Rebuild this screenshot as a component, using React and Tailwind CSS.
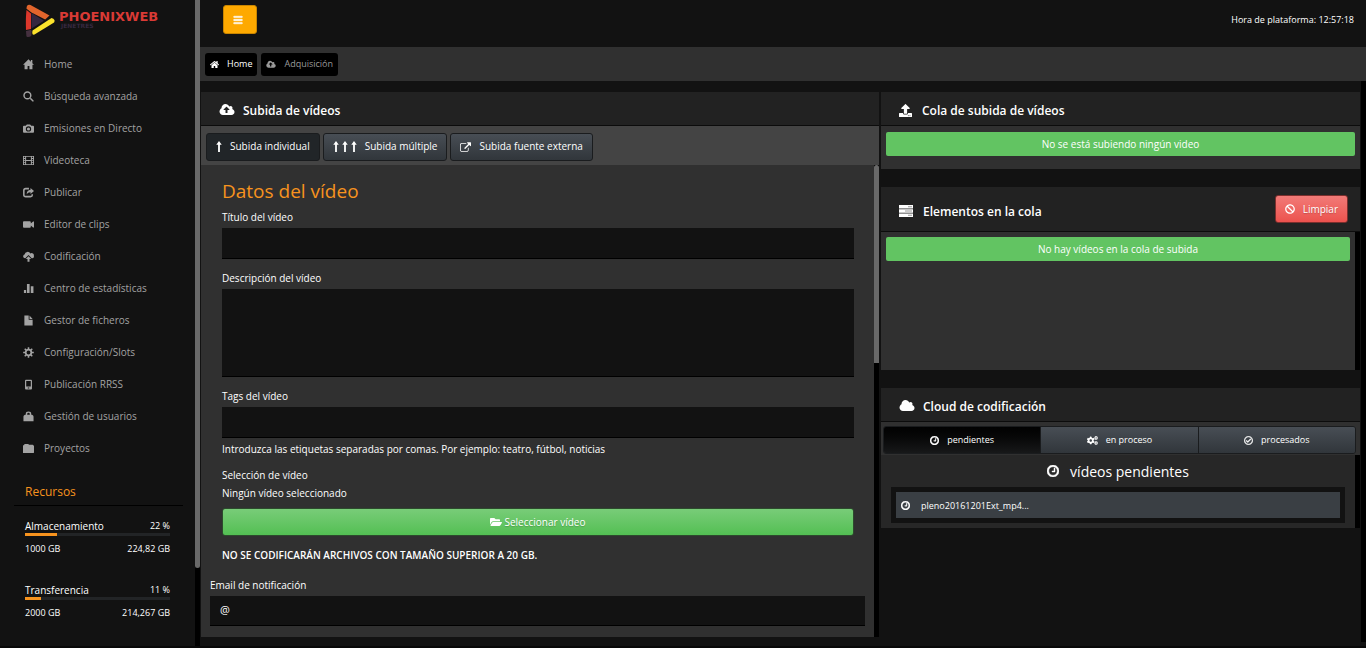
import React from "react";
import {
  FaUpload, FaBan, FaCogs, FaRegCheckCircle, FaFolderOpen, FaBars, FaHome,
} from "react-icons/fa";

const svg = (viewBox, children) =>
  function Icon({ className }) {
    return (
      <svg viewBox={viewBox} fill="currentColor" className={className} aria-hidden="true">
        {children}
      </svg>
    );
  };

const CLOUD =
  "M1984 1152q0 159-112.5 271.5t-271.5 112.5h-1088q-185 0-316.5-131.5t-131.5-316.5q0-130 70-240t188-165q-2-30-2-43 0-212 150-362t362-150q156 0 285.5 87t188.5 231q71-62 166-62 106 0 181 75t75 181q0 76-41 138 130 31 213.5 135.5t83.5 238.5z";

const CloudUp = svg(
  "0 0 2048 1792",
  <path fillRule="evenodd" d={"M1344 864q0-14-9-23l-352-352q-9-9-23-9t-23 9l-351 351q-10 12-10 24 0 14 9 23t23 9h224v352q0 13 9.5 22.5t22.5 9.5h192q13 0 22.5-9.5t9.5-22.5v-352h224q13 0 22.5-9.5t9.5-22.5z" + CLOUD} />
);
const Cloud = svg("0 0 2048 1792", <path d={CLOUD} />);
const Clock = svg(
  "0 128 1536 1536",
  <path stroke="currentColor" strokeWidth="60" d="M1024 544v448q0 14-9 23t-23 9h-320q-14 0-23-9t-9-23v-64q0-14 9-23t23-9h224v-352q0-14 9-23t23-9h64q14 0 23 9t9 23zM1312 896q0-148-73-273t-198-198-273-73-273 73-198 198-73 273 73 273 198 198 273 73 273-73 198-198 73-273zM1536 896q0 209-103 385.5t-279.5 279.5-385.5 103-385.5-103-279.5-279.5-103-385.5 103-385.5 279.5-279.5 385.5-103 385.5 103 279.5 279.5 103 385.5z" />
);
const External = svg(
  "0 0 1792 1536",
  <path d="M1408 928v320q0 119-84.5 203.5t-203.5 84.5h-832q-119 0-203.5-84.5t-84.5-203.5v-832q0-119 84.5-203.5t203.5-84.5h704q14 0 23 9t9 23v64q0 14-9 23t-23 9h-704q-66 0-113 47t-47 113v832q0 66 47 113t113 47h832q66 0 113-47t47-113v-320q0-14 9-23t23-9h64q14 0 23 9t9 23zM1792 64v512q0 26-19 45t-45 19-45-19l-176-176-652 652q-10 10-23 10t-23-10l-114-114q-10-10-10-23t10-23l652-652-176-176q-19-19-19-45t19-45 45-19h512q26 0 45 19t19 45z" />
);
const ArrowUp = svg("0 0 6 12", <path d="M3 0 6 4H4v8H2V4H0z" />);
const Tasks = svg(
  "0 0 14 12",
  <>
    <path d="M0 0h14v3.4H0zM0 4.300h14v3.400H0zM0 8.600h14V12H0z" />
    <path fill="#9a9a9a" d="M9 1.200h4v1H9zM6 5.500h7v1H6zM9 9.800h4v1H9z" />
  </>
);

const Home = svg("0 0 12 12", <path d="M6 .4 0 6.4h1.7v4.9H5V7.6h2v3.7h3.3V6.4H12L10.2 4.600V1.200H8.600V3z" />);
const Search = svg(
  "0 0 12 12",
  <>
    <circle cx="4.800" cy="4.800" r="3.700" fill="none" stroke="currentColor" strokeWidth="1.600" />
    <path d="m7.400 8.500 1.100-1.100 3 3c.5.800-.4 1.600-1.100 1.100z" />
  </>
);
const Camera = svg(
  "0 0 12 12",
  <path fillRule="evenodd" d="M1 3h2l1.200-1.500h3.600L9 3h2q1 0 1 1v5.500q0 1-1 1H1q-1 0-1-1V4q0-1 1-1zm5 .6a2.900 2.900 0 1 0 0 5.800 2.900 2.900 0 0 0 0-5.800zm0 1.200a1.700 1.700 0 1 1 0 3.400 1.700 1.700 0 0 1 0-3.400z" />
);
const Film = svg(
  "0 0 12 12",
  <path fillRule="evenodd" d="M0 1h12v10H0zM1 2v1.300h1.300V2zm0 2.300v1.300h1.300V4.300zm0 2.200v1.300h1.300V6.500zm0 2.200V10h1.300V8.700zM9.700 2v1.300H11V2zm0 2.300v1.300H11V4.300zm0 2.200v1.300H11V6.500zm0 2.200V10H11V8.700zM3.400 2v3.400h5.200V2zm0 4.600V10h5.200V6.600z" />
);
const Share = svg(
  "0 0 12 12",
  <>
    <path d="M6.500 1.800H3Q.9 1.800.9 3.900v4.800q0 1.800 2.100 1.800h5.200q1.900 0 1.900-1.800V8" fill="none" stroke="currentColor" strokeWidth="1.700" />
    <path d="m8.200 1 3.800 3.300-3.800 3.200V5.600Q5.400 5.500 4 7.800 4.200 3.400 8.200 3z" />
  </>
);
const Video = svg("0 0 12 12", <path d="M1 2.500h6.500q1 0 1 1v1.300L11 2.800h1v6.400h-1L8.500 7.200v1.300q0 1-1 1H1q-1 0-1-1v-5q0-1 1-1z" />);
const CloudArrow = svg(
  "0 0 12 12",
  <>
    <path d="M3 8H2.200A2.200 2.200 0 0 1 1.700 3.700 3.500 3.500 0 0 1 8.100 2.600 2.500 2.500 0 0 1 11.800 5.400 2 2 0 0 1 10.200 8H9.500L6 4.300 2.500 8z" />
    <path d="M6 5.700 8.900 8.700H7.100v3H4.900v-3H3.100z" />
  </>
);
const Stats = svg("0 0 12 12", <path d="M1 7.500h2.400V11H1zM4.300 1h2.900v10H4.300zM8.500 3.500h2.900V11H8.500z" />);
const File = svg("0 0 12 12", <path d="M1.500 .5h4.700v4.700h4.300v6.300h-9zM7.100 .5l3.400 3.800H7.100z" />);
const Gear = svg(
  "0 0 12 12",
  <>
    <circle cx="6" cy="6" r="3.100" fill="none" stroke="currentColor" strokeWidth="1.900" />
    <path d="M6 .2v2.300M6 9.500v2.300M.2 6h2.300M9.500 6h2.300M1.900 1.900l1.600 1.600M8.500 8.500l1.600 1.600M1.900 10.100l1.600-1.600M8.500 3.500l1.600-1.600" stroke="currentColor" strokeWidth="1.700" />
  </>
);
const Phone = svg("0 0 12 12", <path fillRule="evenodd" d="M3.200.8h5.600q1 0 1 1v8.600q0 1-1 1H3.200q-1 0-1-1V1.800q0-1 1-1zM3.500 2.300v6h5v-6zM5.200 9.300v1h1.600v-1z" />);
const Bag = svg("0 0 12 12", <path fillRule="evenodd" d="M3 4V3.200Q3 .6 6 .6t3 2.600V4h.8q1.700.5 1.700 2V11.200H.5V6Q.5 4.500 2.200 4zm1.600 0h2.800V3.300Q7.400 2 6 2T4.600 3.300z" />);
const Folder = svg("0 0 12 12", <path d="M1.200 2.500V2.100q0-1 1-1h3.200q.8 0 1.200.9H10.500q1 0 1 1h.5v7q0 1-1 1H0V2.500z" />);

const NAV = [
  [Home, "Home"], [Search, "Búsqueda avanzada"], [Camera, "Emisiones en Directo"],
  [Film, "Videoteca"], [Share, "Publicar"], [Video, "Editor de clips"],
  [CloudArrow, "Codificación"], [Stats, "Centro de estadísticas"], [File, "Gestor de ficheros"],
  [Gear, "Configuración/Slots"], [Phone, "Publicación RRSS"], [Bag, "Gestión de usuarios"],
  [Folder, "Proyectos"],
];

const RESOURCES = [
  { name: "Almacenamiento", percent: 22, total: "1000 GB", used: "224,82 GB" },
  { name: "Transferencia", percent: 11, total: "2000 GB", used: "214,267 GB" },
];

function Logo() {
  return (
    <a href="#" className="flex h-12 items-start gap-[3px] pt-1 pl-6" aria-label="Phoenixweb">
      <svg viewBox="0 0 32 34" className="h-[34px] w-8" aria-hidden="true">
        <path d="M7.500 9v15.500L20 16.800z" fill="#35273f" />
        <path d="M2.500 6 7 9.500V25l-5 1Q1.500 14 2.500 6z" fill="#dc372b" />
        <path d="M2.500 4.800Q2.500-.3 6.500.900L25.500 11.600l-4.300 3.800L7.500 8.500z" fill="#e2652c" />
        <path d="M2 27l5-1.300.6 1.500L7.300 32Q4 34 2.400 32.200z" fill="#45303f" />
        <path d="M8.500 26.500 27.500 14q4.500 1.500 2.600 4.500L10.500 30.500Q7.500 31.500 8.500 26.500z" fill="#fbe22c" />
      </svg>
      <span className="flex flex-col pt-2 font-['DejaVu_Sans',sans-serif] font-bold">
        <span className="text-[13px] leading-[10px] text-[#d93a35]">PHOENIXWEB</span>
        <span className="pl-[2px] text-[6px] leading-[7px] text-[#35293f]">JENETRES</span>
      </span>
    </a>
  );
}

function Sidebar() {
  return (
    <aside className="flex w-[200px] shrink-0">
      <div className="flex-1">
        <Logo />
        <nav>
          <ul>
            {NAV.map(([Icon, label]) => (
              <li key={label}>
                <a href="#" className="flex h-8 items-center gap-[10px] pl-[23px] text-[10px] font-medium text-[#a3a3a3]">
                  <Icon className="size-[11px]" />
                  {label}
                </a>
              </li>
            ))}
          </ul>
        </nav>
        <section className="mt-[10px] mr-3 ml-[14px]">
          <h2 className="h-8 border-b border-black pt-2 pl-[11px] text-[12px] leading-5 font-medium text-[#f7931e]">Recursos</h2>
          {RESOURCES.map((r) => (
            <div key={r.name} className="h-16 pt-3 pr-[13px] pl-[11px] text-[9px] leading-4 font-medium text-white">
              <div className="flex h-[15px] items-center justify-between">
                <span className="text-[10px]">{r.name}</span>
                <span>{r.percent} %</span>
              </div>
              <div className="h-[3px] bg-[#222426]">
                <div className="h-full bg-[#f7931e]" style={{ width: `${r.percent}%` }} />
              </div>
              <div className="mt-[5px] flex justify-between">
                <span>{r.total}</span>
                <span>{r.used}</span>
              </div>
            </div>
          ))}
        </section>
      </div>
      <div className="w-[5px] bg-black">
        <div className="h-[88%] rounded-b-sm bg-[#696969]" />
      </div>
    </aside>
  );
}

function PanelHeader({ icon, title, children, className = "h-[34px]" }) {
  return (
    <div className={"flex items-center border-b border-[#0c0c0c] bg-[#222] pr-3 pl-[18px] text-white " + className}>
      {icon}
      <h2 className="flex-1 pt-[5px] text-[12px] leading-5 font-semibold">{title}</h2>
      {children}
    </div>
  );
}

const TOOL = "flex h-7 items-center gap-2 rounded-[3px] border border-[#1a1c1e] px-[9px] text-[10px] font-medium text-white";
const FIELD = "block w-full border-b border-black bg-[#121212] px-2 text-[10px] text-white outline-none";

function UploadPanel() {
  return (
    <section className="flex flex-1 flex-col">
      <PanelHeader icon={<CloudUp className="mt-[3px] mr-2 h-[14px] w-4" />} title="Subida de vídeos" />
      <div className="flex h-[39px] items-center gap-[3px] bg-[#444] px-[5px] pt-[2px]">
        <button className={TOOL + " bg-[#212528]"}>
          <ArrowUp className="h-[11px] w-[6px]" />
          Subida individual
        </button>
        <button className={TOOL + " bg-linear-to-b from-[#484e55] to-[#31363b]"}>
          <span className="flex gap-[3px]">
            <ArrowUp className="h-[11px] w-[6px]" />
            <ArrowUp className="h-[11px] w-[6px]" />
            <ArrowUp className="h-[11px] w-[6px]" />
          </span>
          Subida múltiple
        </button>
        <button className={TOOL + " bg-linear-to-b from-[#484e55] to-[#31363b]"}>
          <External className="h-[10px] w-[11px]" />
          Subida fuente externa
        </button>
      </div>
      <div className="flex bg-[#303030]">
        <form className="flex-1 pb-[11px] text-[10px] leading-[18px] font-medium text-white">
          <div className="pr-5 pl-[21px]">
            <h3 className="pt-[14px] pb-[5px] text-[19px] leading-6 font-normal text-[#f7931e]">Datos del vídeo</h3>
            <label htmlFor="title" className="block pb-[2px]">Título del vídeo</label>
            <input id="title" className={FIELD + " h-[31px]"} />
            <label htmlFor="description" className="block pt-[10px] pb-[2px]">Descripción del vídeo</label>
            <textarea id="description" className={FIELD + " h-[88px] resize-none"} />
            <label htmlFor="tags" className="block pt-[10px] pb-[2px]">Tags del vídeo</label>
            <input id="tags" className={FIELD + " h-[31px]"} />
            <p className="pt-[2px]">Introduzca las etiquetas separadas por comas. Por ejemplo: teatro, fútbol, noticias</p>
            <p className="pt-2">Selección de vídeo</p>
            <p>Ningún vídeo seleccionado</p>
            <button type="button" className="mt-[6px] flex h-7 w-full items-center justify-center gap-[2px] rounded-[3px] border border-[#2d4a2d] bg-linear-to-b from-[#78cc78] to-[#53bf53] text-[10px] text-white text-shadow-xs">
              <FaFolderOpen className="size-3" />
              Seleccionar vídeo
            </button>
            <p className="pt-[10px] font-semibold">NO SE CODIFICARÁN ARCHIVOS CON TAMAÑO SUPERIOR A 20 GB.</p>
          </div>
          <div className="px-[9px] pt-3">
            <label htmlFor="email" className="block pb-[2px]">Email de notificación</label>
            <div className="flex border-b border-black bg-[#121212]">
              <span className="w-[30px] pt-[5px] pl-[10px] text-[11px]">@</span>
              <input id="email" type="email" className="h-[29px] flex-1 bg-transparent outline-none" />
            </div>
          </div>
        </form>
        <div className="w-[5px] bg-black">
          <div className="h-[42%] rounded-t-sm bg-[#696969]" />
        </div>
      </div>
    </section>
  );
}

const ALERT = "flex h-6 items-center justify-center rounded-xs bg-[#62c462] text-[10px] font-medium text-white";
const TAB = "flex flex-1 items-center justify-center gap-2";

function Queue() {
  return (
    <div className="flex w-[479px] shrink-0 flex-col">
      <section className="bg-[#303030]">
        <PanelHeader icon={<FaUpload className="mt-[3px] mr-[10px] size-[13px]" />} title="Cola de subida de vídeos" />
        <div className="px-[5px] pt-[6px] pb-[13px]">
          <p className={ALERT}>No se está subiendo ningún video</p>
        </div>
      </section>
      <section className="mt-[18px]">
        <PanelHeader className="h-[45px]" icon={<Tasks className="mt-[3px] mr-[10px] h-3 w-[14px]" />} title="Elementos en la cola">
          <button className="flex h-7 items-center gap-2 rounded-[3px] border border-[#7c2f2d] bg-linear-to-b from-[#f17a77] to-[#ec524e] px-[9px] text-[10px] font-medium text-white text-shadow-xs">
            <FaBan className="size-[10px]" />
            Limpiar
          </button>
        </PanelHeader>
        <div className="flex bg-black">
          <div className="h-[138px] flex-1 bg-[#303030] p-[5px]">
            <p className={ALERT}>No hay vídeos en la cola de subida</p>
          </div>
          <div className="w-[5px]" />
        </div>
      </section>
      <section className="mt-[18px]">
        <PanelHeader icon={<Cloud className="mt-[3px] mr-2 h-[14px] w-4" />} title="Cloud de codificación" />
        <div className="bg-[#303030] pt-1 pr-1 pb-[1px] pl-[2px]">
          <div className="flex h-7 divide-x divide-[#1a1c1e] rounded-[3px] border border-[#1a1c1e] text-[9px] font-medium text-white" role="tablist">
            <button role="tab" aria-selected="true" className={TAB + " rounded-l-[2px] bg-linear-to-b from-[#020202] to-[#171819]"}>
              <Clock className="size-[9px]" />
              pendientes
            </button>
            <button role="tab" aria-selected="false" className={TAB + " bg-linear-to-b from-[#484e55] to-[#31363b]"}>
              <FaCogs className="size-[11px]" />
              en proceso
            </button>
            <button role="tab" aria-selected="false" className={TAB + " rounded-r-[2px] bg-linear-to-b from-[#484e55] to-[#31363b]"}>
              <FaRegCheckCircle className="size-[9px]" stroke="currentColor" strokeWidth="20" />
              procesados
            </button>
          </div>
        </div>
        <div className="flex bg-black">
          <div className="flex-1 bg-[#272727] px-[10px] pb-[5px] text-white">
            <h3 className="flex h-8 items-center justify-center gap-[11px] text-[14px]">
              <Clock className="size-3" />
              vídeos pendientes
            </h3>
            <ul className="border-x-[5px] border-y-[5px] border-[#121212] bg-[#3a3f44]">
              <li className="flex h-[26px] items-center gap-[11px] pt-[1px] pl-[5px] text-[9px] font-medium">
                <Clock className="size-[9px]" />
                pleno20161201Ext_mp4...
              </li>
            </ul>
          </div>
          <div className="w-[5px]" />
        </div>
      </section>
    </div>
  );
}

export default function App() {
  return (
    <div className="flex min-h-screen border-b-2 border-[#080808] bg-[#121212] font-['Open_Sans','Noto_Sans',sans-serif]">
      <Sidebar />
      <div className="flex flex-1 flex-col">
        <header className="flex h-[47px] items-start justify-between pt-[5px] pr-3 pl-[23px]">
          <button aria-label="Menú" className="flex h-[29px] w-[34px] items-center rounded-[3px] border border-[#c98500] bg-[#fea900] pl-[9px] text-white">
            <FaBars className="size-[10px]" stroke="currentColor" strokeWidth="24" />
          </button>
          <p className="pt-[7px] text-[9px] leading-4 font-medium text-white">Hora de plataforma: 12:57:18</p>
        </header>
        <nav className="flex h-[34px] items-center gap-1 bg-[#303030] px-[5px] text-[9px] font-medium">
          <a href="#" className="flex h-[23px] items-center gap-2 rounded-[3px] bg-black px-[5px] text-white">
            <FaHome className="size-[9px]" />
            Home
          </a>
          <a href="#" className="flex h-[23px] items-center gap-2 rounded-[3px] bg-black px-[5px] text-[#9a9a9a]">
            <CloudUp className="h-[9px] w-[10px]" />
            Adquisición
          </a>
        </nav>
        <main className="flex flex-1">
          <div className="flex flex-1 items-start gap-[2px] pt-[11px] pr-[1px] pl-[1px]">
            <UploadPanel />
            <Queue />
          </div>
          <div className="mb-1 w-[5px] bg-black" />
        </main>
      </div>
    </div>
  );
}
